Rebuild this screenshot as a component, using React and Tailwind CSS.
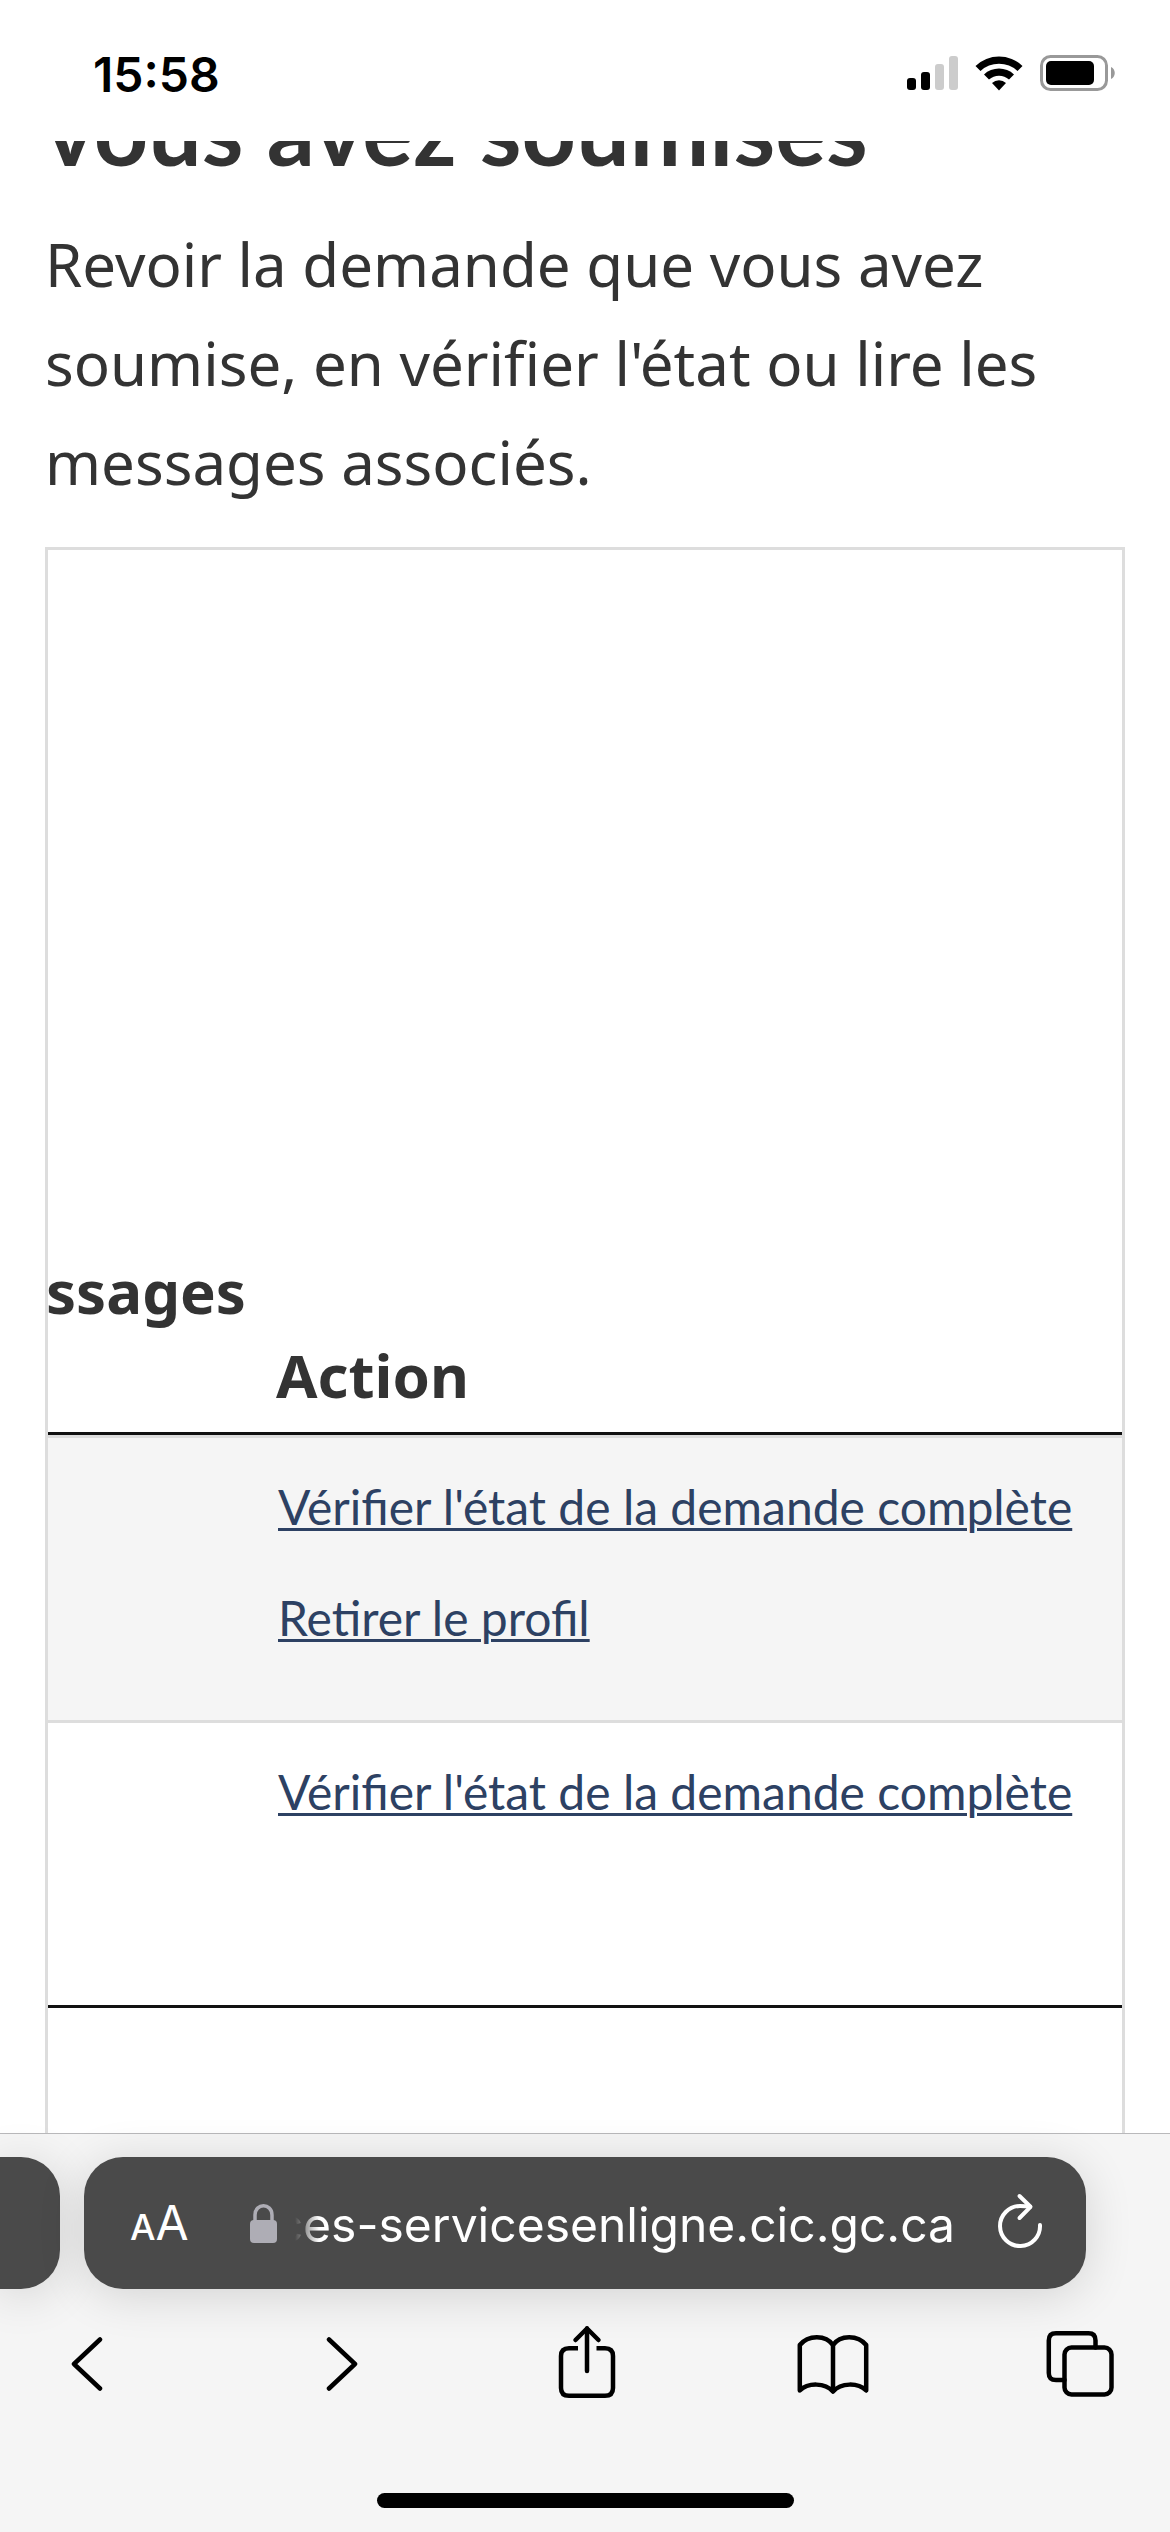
const signalBars = [
    { x: 0, y: 22, height: 12, on: true },
    { x: 14, y: 16, height: 18, on: true },
    { x: 28, y: 8, height: 26, on: false },
    { x: 42, y: 0, height: 34, on: false },
];

const applications = [
    {
        id: "complete",
        shaded: true,
        actions: ["Vérifier l'état de la demande complète", "Retirer le profil"],
    },
    {
        id: "verifier",
        shaded: false,
        actions: ["Vérifier l'état de la demande complète"],
    },
];

const SignalIcon = () => (
    <svg width="51" height="34" viewBox="0 0 51 34" aria-hidden="true">
        {signalBars.map((bar) => (
            <rect
                key={bar.x}
                x={bar.x}
                y={bar.y}
                width="9"
                height={bar.height}
                rx="3"
                fill={bar.on ? "#000" : "#ccc"}
            />
        ))}
    </svg>
);

const WifiIcon = () => (
    <svg width="50" height="36" viewBox="0 0 50 36" aria-hidden="true">
        <path d="M1.5 11 A34 34 0 0 1 48.5 11 L43.5 16 A27 27 0 0 0 6.5 16 Z" />
        <path d="M10 19.5 A22 22 0 0 1 40 19.5 L35 24.5 A15 15 0 0 0 15 24.5 Z" />
        <path d="M18 28 A10.5 10.5 0 0 1 32 28 L25 35.5 Z" />
    </svg>
);

const BatteryIcon = () => (
    <svg width="76" height="36" viewBox="0 0 76 36" aria-hidden="true">
        <rect x="1.5" y="1.5" width="65" height="33" rx="9" fill="none" stroke="#999" strokeWidth="3" />
        <rect x="6" y="6" width="48" height="24" rx="5" />
        <path d="M71 12 C76 14 76 22 71 24 Z" fill="#999" />
    </svg>
);

const LockIcon = () => (
    <svg width="27" height="39" viewBox="0 0 27 39" fill="#aeadb5" aria-hidden="true">
        <rect y="16" width="27" height="23" rx="4" />
        <path
            d="M5 18 V11 C5 -1.2 22 -1.2 22 11 V18"
            fill="none"
            stroke="#aeadb5"
            strokeWidth="3.5"
        />
    </svg>
);

const ReloadIcon = () => (
    <svg
        width="46"
        height="60"
        viewBox="0 0 46 60"
        fill="none"
        stroke="#fff"
        strokeWidth="4"
        strokeLinecap="round"
        strokeLinejoin="round"
        aria-hidden="true"
    >
        <path d="M33 13.8 C29 13 26 13 23 13 A20 20 0 1 0 43 32" />
        <path d="M22.5 3 L33.5 13.8 L22.5 25" />
    </svg>
);

const ToolButton = ({ label, width, children }) => (
    <button type="button" aria-label={label} className="flex w-[72px] justify-center">
        <svg
            width={width}
            height="76"
            viewBox={`0 0 ${width} 76`}
            fill="none"
            stroke="#000"
            strokeWidth="4.5"
            strokeLinecap="round"
            strokeLinejoin="round"
            aria-hidden="true"
        >
            {children}
        </svg>
    </button>
);

const StatusBar = () => (
    <div className="flex h-[141px] items-center justify-between bg-white pr-[54px] pl-[93px]">
        <span className="pt-2 font-['Inter',sans-serif] text-[48px] leading-[56px] font-semibold text-black">
            15:58
        </span>
        <div className="flex items-center gap-4 pt-1">
            <SignalIcon />
            <WifiIcon />
            <BatteryIcon />
        </div>
    </div>
);

const ApplicationsTable = () => (
    <div className="flex flex-1 justify-end overflow-hidden border-x-[3px] border-t-[3px] border-[#ddd]">
        <table className="w-[calc(100%+120px)] shrink-0 table-fixed border-separate border-spacing-0 self-start text-left">
            <thead>
                <tr className="h-[885px] align-bottom font-['Noto_Sans',sans-serif] text-[60px] leading-[84px]">
                    <th className="w-[318px] border-b-[3px] border-[#111] pb-[99px] text-right font-bold">Messages</th>
                    <th className="border-b-[3px] border-[#111] pb-[15px] pl-[30px] font-bold">Action</th>
                </tr>
            </thead>
            <tbody className="font-['Lato',sans-serif] text-[48px] leading-[72px]">
                {applications.map((app) => (
                    <tr key={app.id} className={app.shaded ? "h-[285px] bg-[#f5f5f5]" : "h-[285px]"}>
                        <td className="border-t-[3px] border-[#ddd]"></td>
                        <td className="border-t-[3px] border-[#ddd] pt-[33px] pl-[32px] align-top">
                            <div className="flex flex-col items-start gap-[39px]">
                                {app.actions.map((action) => (
                                    <a
                                        key={action}
                                        href="#"
                                        className="whitespace-nowrap text-[#2d4163] underline decoration-[3px] underline-offset-[3px]"
                                    >
                                        {action}
                                    </a>
                                ))}
                            </div>
                        </td>
                    </tr>
                ))}
                <tr>
                    <td colSpan={2} className="border-t-[3px] border-[#111]"></td>
                </tr>
            </tbody>
        </table>
    </div>
);

const AddressBar = () => (
    <div className="flex gap-6 pt-[23px]">
        <div className="h-[132px] w-[60px] rounded-r-[39px] bg-[#4a4a4a] shadow-[0_6px_48px_rgba(0,0,0,0.14)]" />
        <div className="mr-[84px] flex h-[132px] min-w-0 flex-1 items-center rounded-[39px] bg-[#4a4a4a] pr-[43px] pl-[46px] font-['Inter',sans-serif] text-white shadow-[0_6px_48px_rgba(0,0,0,0.14)]">
            <button type="button" aria-label="Taille du texte" className="flex items-baseline pt-1">
                <span className="text-[36px] leading-[60px] font-medium">A</span>
                <span className="text-[48px] leading-[60px]">A</span>
            </button>
            <div className="ml-auto flex items-center gap-[18px]">
                <LockIcon />
                <div className="flex w-[660px] justify-end overflow-hidden pt-1 [mask-image:linear-gradient(to_right,transparent,black_24px)]">
                    <span className="text-[48px] leading-[60px] whitespace-nowrap">services-servicesenligne.cic.gc.ca</span>
                </div>
            </div>
            <button type="button" aria-label="Actualiser" className="ml-[42px]">
                <ReloadIcon />
            </button>
        </div>
    </div>
);

const Toolbar = () => (
    <nav className="flex items-center justify-between pt-9 pr-[54px] pl-[57px]">
        <ToolButton label="Page précédente" width={44}>
            <path d="M29 14.5 L3 39 L29 63.5" />
        </ToolButton>
        <ToolButton label="Page suivante" width={36}>
            <path d="M7 14.5 L33 39 L7 63.5" />
        </ToolButton>
        <ToolButton label="Partager" width={58}>
            <path
                d="M20 23.2 H11 Q3 23.2 3 31 V63 Q3 70.8 11 70.8 H47 Q55 70.8 55 63 V31 Q55 23.2 47 23.2 H38.5"
                strokeLinecap="butt"
            />
            <path d="M29 46 V3.5" />
            <path d="M17.5 15 L29 3.5 L40.500 15" />
        </ToolButton>
        <ToolButton label="Signets" width={72}>
            <path d="M36 20 C29 9.5 11 9.500 2.8 20 V65.500 C11 57.500 28 57.500 36 66.500 C44 57.500 61 57.500 69.200 65.500 V20 C61 9.500 43 9.500 36 20 Z" />
            <path d="M36 20 V66" />
        </ToolButton>
        <ToolButton label="Onglets" width={68}>
            <rect x="18.5" y="22.5" width="47" height="47" rx="7" />
            <path d="M18.500 55 H10 Q2.800 55 2.800 48 V15.500 Q2.800 8.300 10 8.300 H42.500 Q49.500 8.300 49.500 15.500 V22.500" />
        </ToolButton>
    </nav>
);

export default function App() {
    return (
        <div className="flex min-h-screen flex-col overflow-hidden bg-white text-[#333]">
            <StatusBar />
            <main className="flex flex-1 flex-col px-[45px]">
                {/* The heading has scrolled halfway under the status bar */}
                <div className="flex h-9 items-end overflow-hidden">
                    <h1 className="font-['Lato',sans-serif] text-[95px] leading-[96px] font-bold whitespace-nowrap">
                        vous avez soumises
                    </h1>
                </div>
                <p className="mt-[38px] mb-[35px] font-['Noto_Sans',sans-serif] text-[60px] leading-[99px]">
                    Revoir la demande que vous avez soumise, en vérifier l'état ou lire les messages associés.
                </p>
                <ApplicationsTable />
            </main>
            <footer className="border-t border-[#b9b9bb] bg-[#f5f5f5] pb-6">
                <AddressBar />
                <Toolbar />
                <div className="mx-auto mt-[92px] h-[15px] w-[417px] rounded-full bg-black" />
            </footer>
        </div>
    );
}
